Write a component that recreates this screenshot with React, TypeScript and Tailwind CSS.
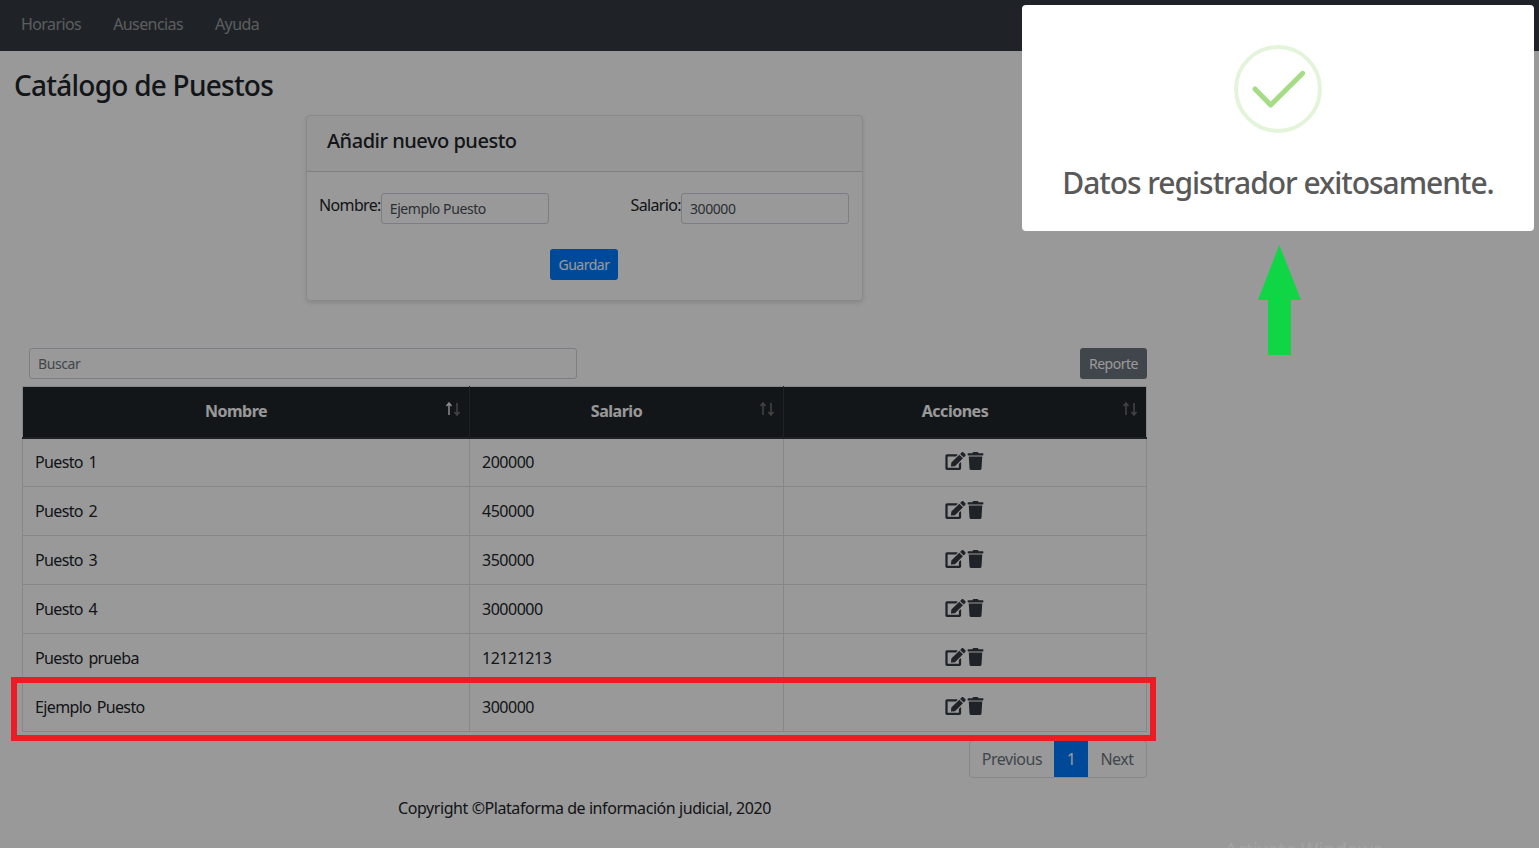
import { FaEdit, FaTrash } from 'react-icons/fa';

const rows = [
  ['Puesto 1', '200000'],
  ['Puesto 2', '450000'],
  ['Puesto 3', '350000'],
  ['Puesto 4', '3000000'],
  ['Puesto prueba', '12121213'],
  ['Ejemplo Puesto', '300000'],
];

function SortArrows({ active }: { active?: boolean }) {
  return (
    <svg className="absolute right-[8px] top-[15px]" width="16" height="14" viewBox="0 0 16 14" fill="none" stroke="currentColor" strokeWidth="1.5">
      <path d="M4 13V1.5M1.5 4 4 1l2.5 3" opacity={active ? 0.9 : 0.35} />
      <path d="M12 1v11.5M9.5 10l2.5 3 2.5-3" opacity="0.35" />
    </svg>
  );
}

function SortHeader({ label, active }: { label: string; active?: boolean }) {
  return (
    <th className="relative border border-[#32383e] border-t-[#dee2e6] border-b-2 pb-[2px] pr-[20px] text-center font-bold first:border-l-[#dee2e6] last:border-r-[#dee2e6]">
      {label}
      <SortArrows active={active} />
    </th>
  );
}

export default function App() {
  return (
    <div className="relative h-[848px] overflow-hidden bg-white font-['Noto_Sans',sans-serif] text-[16px] tracking-[-0.03em] text-[#212529]">
      {/* Navbar */}
      <nav className="flex h-[51px] items-center gap-[32px] bg-[#343a40] pb-[4px] pl-[21px] tracking-[-0.037em] text-white/50">
        <a>Horarios</a>
        <a>Ausencias</a>
        <a>Ayuda</a>
      </nav>

      <main className="w-[1169px]">
        <h3 className="pl-[14px] pt-[14px] text-[28px] font-medium leading-[40px] tracking-[-0.027em]">Catálogo de Puestos</h3>

        {/* Form card */}
        <section className="ml-[306px] mt-[10px] h-[186px] w-[557px] rounded border border-black/10 shadow-[0_2px_4px_rgba(0,0,0,0.12)]">
          <div className="flex h-[56px] items-center border-b border-black/15 bg-black/[0.02] pb-[5px] pl-[20px] text-[20px] font-medium">
            Añadir nuevo puesto
          </div>
          <div className="flex justify-between pl-[12px] pr-[13px] pt-[21px]">
            <label className="flex items-start leading-[24px] tracking-[-0.04em]">
              Nombre:
              <input
                readOnly
                value="Ejemplo Puesto"
                className="h-[31px] w-[168px] rounded-[3px] border border-[#ced4da] px-[8px] text-[14px] tracking-[-0.03em] text-[#495057]"
              />
            </label>
            <label className="flex items-start leading-[24px] tracking-[-0.04em]">
              Salario:
              <input
                readOnly
                value="300000"
                className="h-[31px] w-[168px] rounded-[3px] border border-[#ced4da] px-[8px] text-[14px] tracking-[-0.03em] text-[#495057]"
              />
            </label>
          </div>
          <div className="mt-[25px] flex justify-center pr-[1px]">
            <button className="h-[31px] w-[68px] rounded-[3px] bg-[#007bff] text-[14px] text-white">Guardar</button>
          </div>
        </section>

        {/* Search + report */}
        <div className="ml-[29px] mt-[47px] flex w-[1118px] justify-between">
          <input
            placeholder="Buscar"
            className="h-[31px] w-[548px] rounded-[3px] border border-[#ced4da] px-[8px] text-[14px] tracking-[-0.03em] placeholder:text-[#6c757d]"
          />
          <button className="h-[31px] w-[67px] rounded-[3px] bg-[#6c757d] text-[14px] text-white">Reporte</button>
        </div>

        {/* Table */}
        <table className="ml-[22px] mt-[7px] w-[1124px] table-fixed border-collapse">
          <colgroup>
            <col className="w-[447px]" />
            <col className="w-[314px]" />
            <col className="w-[363px]" />
          </colgroup>
          <thead className="bg-[#212529] text-white">
            <tr className="h-[51px]">
              <SortHeader label="Nombre" active />
              <SortHeader label="Salario" />
              <SortHeader label="Acciones" />
            </tr>
          </thead>
          <tbody>
            {rows.map(([name, salary]) => (
              <tr key={name} className="h-[49px]">
                <td className="border border-[#dee2e6] px-[12px] tracking-[-0.04em] [word-spacing:2px]">{name}</td>
                <td className="border border-[#dee2e6] px-[12px]">{salary}</td>
                <td className="border border-[#dee2e6] px-[12px]">
                  <div className="flex items-center justify-center gap-[1px] pb-[3px] pr-[1px] text-[#343a40]">
                    <FaEdit className="h-[18px] w-[21px]" />
                    <FaTrash className="h-[18px] w-[17px]" />
                  </div>
                </td>
              </tr>
            ))}
          </tbody>
        </table>

        {/* Pagination */}
        <div className="ml-[969px] mt-[8px] flex h-[38px] w-[178px] rounded border border-[#dee2e6] leading-[36px]">
          <a className="w-[84px] text-center text-[#6c757d]">Previous</a>
          <a className="w-[34px] bg-[#007bff] text-center text-white">1</a>
          <a className="flex-1 text-center text-[#6c757d]">Next</a>
        </div>

        <footer className="mt-[18px] text-center leading-[24px] tracking-[-0.027em]">Copyright ©Plataforma de información judicial, 2020</footer>
      </main>

      {/* Modal backdrop */}
      <div className="fixed inset-0 bg-black/40" />

      <div className="absolute bottom-[-16px] left-[1225px] text-[19px] leading-[28px] tracking-normal text-white/10">Activate Windows</div>

      {/* Success alert */}
      <div className="absolute left-[1022px] top-[5px] flex h-[226px] w-[512px] flex-col items-center rounded-[4px] bg-white pt-[40px]">
        <div className="flex h-[88px] w-[88px] items-center justify-center rounded-full border-[4px] border-[#a5dc86]/30">
          <svg width="80" height="80" viewBox="0 0 80 80" fill="none" stroke="#a5dc86" strokeWidth="5" strokeLinecap="round" strokeLinejoin="round">
            <path d="M17 40 32.7 56 64.7 24.3" />
          </svg>
        </div>
        <p className="mt-[27px] text-[30px] font-medium leading-[45px] tracking-[-0.035em] text-[#595959]">Datos registrador exitosamente.</p>
      </div>

      {/* Annotations */}
      <div className="absolute left-[11px] top-[677px] h-[64px] w-[1145px] border-[6px] border-[#ed1c24]" />
      <svg className="absolute left-[1258px] top-[245px]" width="43" height="110" viewBox="0 0 43 110">
        <path d="M21.3 0 43 55H33V110H10V55H0Z" fill="#10d544" />
      </svg>
    </div>
  );
}
